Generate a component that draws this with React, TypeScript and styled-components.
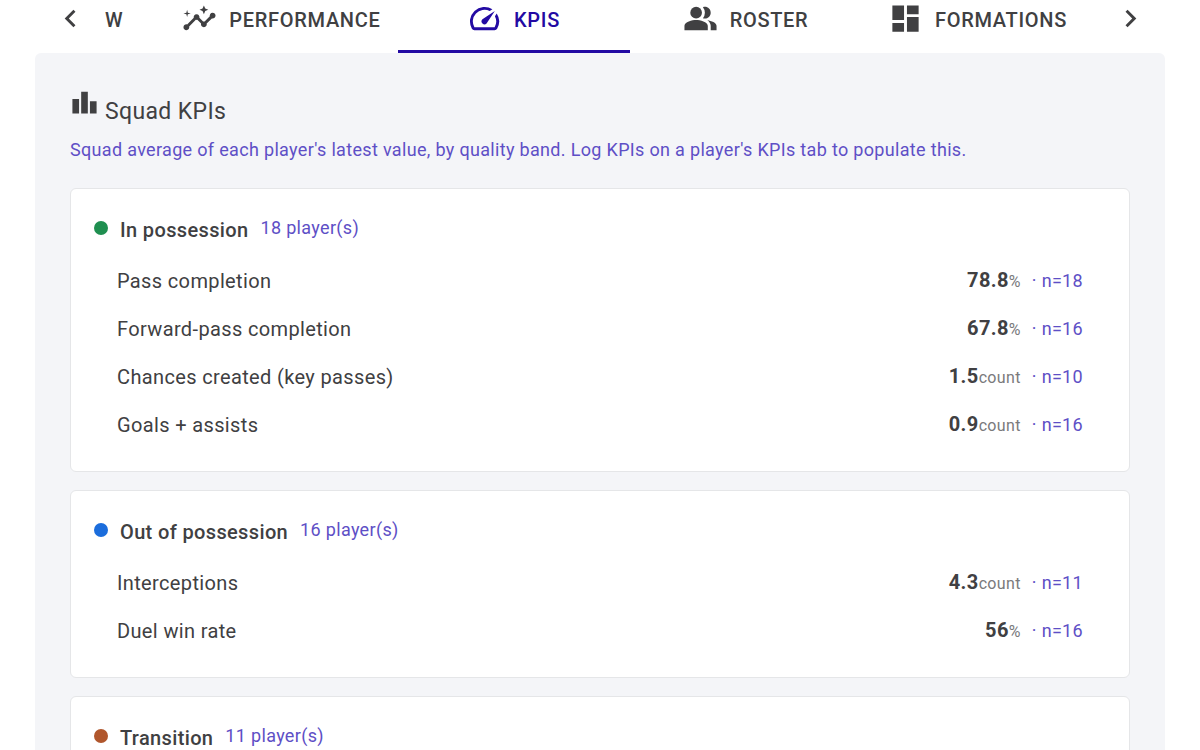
import React from 'react';
import styled, { createGlobalStyle } from 'styled-components';
import {
  MdDashboard,
  MdInsights,
  MdKeyboardArrowLeft,
  MdKeyboardArrowRight,
  MdLeaderboard,
  MdPeopleAlt,
  MdSpeed,
} from 'react-icons/md';

const color = {
  ink: '#404042',
  muted: '#7a7a7c',
  primary: '#230aa3',
  accent: '#5e4fc6',
  panel: '#f4f5f8',
  border: '#e5e6e8',
};

const GlobalStyle = createGlobalStyle`
  *, *::before, *::after { box-sizing: border-box; }
  body {
    margin: 0;
    background: #fff;
    color: ${color.ink};
    font-family: Roboto, "Liberation Sans", sans-serif;
    font-size: 20px;
    line-height: 28px;
    letter-spacing: 0.018em;
  }
`;

const Page = styled.div`
  height: 100vh;
  padding: 0 35px;
  overflow: hidden;
`;

const TabBar = styled.nav`
  display: flex;
  height: 53px;
`;

const TabList = styled.div`
  display: flex;
  flex: 1;
  min-width: 0;
  overflow: hidden;
`;

const ScrollButton = styled.button`
  display: flex;
  flex: none;
  align-items: center;
  justify-content: center;
  width: 70px;
  padding: 0 0 16px;
  border: 0;
  background: none;
  color: ${color.ink};
`;

const Tab = styled.button<{ $active?: boolean; $fit?: boolean }>`
  display: flex;
  flex: none;
  align-items: center;
  justify-content: center;
  gap: 12px;
  min-width: ${(p) => (p.$fit ? '0' : '232px')};
  padding: 0 17px 13px;
  border: 0;
  border-bottom: 3px solid ${(p) => (p.$active ? color.primary : 'transparent')};
  background: none;
  color: ${(p) => (p.$active ? color.primary : color.ink)};
  font: 500 20px/24px Roboto, "Liberation Sans", sans-serif;
  letter-spacing: 0.035em;
  text-transform: uppercase;
`;

const ClippedTab = styled(Tab)`
  padding-left: 0;
  padding-right: 42px;
`;

const TabLabel = styled.span`
  padding-top: 3px;
`;

const Panel = styled.main`
  min-height: 100vh;
  padding: 35px;
  border-radius: 6px;
  background: ${color.panel};
`;

const Heading = styled.h1`
  display: flex;
  align-items: flex-start;
  gap: 6px;
  margin: 0;
  font-size: 23px;
  font-weight: 400;
  line-height: 32px;
`;

const HeadingText = styled.span`
  padding-top: 8px;
`;

const Caption = styled.span`
  color: ${color.accent};
  font-size: 18px;
  font-weight: 400;
  line-height: 28px;
  letter-spacing: 0.018em;
`;

const Intro = styled(Caption).attrs({ as: 'p' })`
  margin: 8px 0 24px;
`;

const Cards = styled.div`
  display: flex;
  flex-direction: column;
  gap: 18px;
`;

const Card = styled.section`
  padding: 22px 23px;
  border: 1px solid ${color.border};
  border-radius: 6px;
  background: #fff;
`;

const CardHead = styled.header`
  display: flex;
  align-items: center;
  gap: 12px;
  height: 34px;
  margin-bottom: 12px;
`;

const Dot = styled.span<{ $color: string }>`
  flex: none;
  width: 14px;
  height: 14px;
  border-radius: 50%;
  background: ${(p) => p.$color};
`;

const CardTitle = styled.h2`
  margin: 0;
  padding-top: 3px;
  font-size: 20px;
  font-weight: 500;
`;

const Metrics = styled.ul`
  margin: 0;
  padding: 0 23px;
  list-style: none;
`;

const Metric = styled.li`
  display: flex;
  align-items: center;
  justify-content: space-between;
  height: 48px;
`;

const Reading = styled.span`
  display: flex;
  align-items: baseline;
`;

const Value = styled.strong`
  font-weight: 700;
`;

const Unit = styled.span`
  margin-right: 11px;
  color: ${color.muted};
  font-size: 16px;
`;

type Band = {
  title: string;
  color: string;
  players: number;
  metrics: { name: string; value: string; unit: string; n: number }[];
};

const bands: Band[] = [
  {
    title: 'In possession',
    color: '#1f8f50',
    players: 18,
    metrics: [
      { name: 'Pass completion', value: '78.8', unit: '%', n: 18 },
      { name: 'Forward-pass completion', value: '67.8', unit: '%', n: 16 },
      { name: 'Chances created (key passes)', value: '1.5', unit: 'count', n: 10 },
      { name: 'Goals + assists', value: '0.9', unit: 'count', n: 16 },
    ],
  },
  {
    title: 'Out of possession',
    color: '#1b6ddc',
    players: 16,
    metrics: [
      { name: 'Interceptions', value: '4.3', unit: 'count', n: 11 },
      { name: 'Duel win rate', value: '56', unit: '%', n: 16 },
    ],
  },
  { title: 'Transition', color: '#b0562c', players: 11, metrics: [] },
];

export default function App() {
  return (
    <Page>
      <GlobalStyle />
      <TabBar>
        <ScrollButton aria-label="Scroll tabs left">
          <MdKeyboardArrowLeft size={35} />
        </ScrollButton>
        <TabList role="tablist">
          <ClippedTab role="tab" $fit>
            <TabLabel>W</TabLabel>
          </ClippedTab>
          <Tab role="tab" $fit>
            <MdInsights size={35} />
            <TabLabel>Performance</TabLabel>
          </Tab>
          <Tab role="tab" aria-selected $active>
            <MdSpeed size={35} />
            <TabLabel>KPIs</TabLabel>
          </Tab>
          <Tab role="tab">
            <MdPeopleAlt size={35} />
            <TabLabel>Roster</TabLabel>
          </Tab>
          <Tab role="tab">
            <MdDashboard size={35} />
            <TabLabel>Formations</TabLabel>
          </Tab>
        </TabList>
        <ScrollButton aria-label="Scroll tabs right">
          <MdKeyboardArrowRight size={35} />
        </ScrollButton>
      </TabBar>
      <Panel>
        <Heading>
          <MdLeaderboard size={29} />
          <HeadingText>Squad KPIs</HeadingText>
        </Heading>
        <Intro>
          Squad average of each player's latest value, by quality band. Log KPIs on a player's KPIs
          tab to populate this.
        </Intro>
        <Cards>
          {bands.map((band) => (
            <Card key={band.title}>
              <CardHead>
                <Dot $color={band.color} />
                <CardTitle>{band.title}</CardTitle>
                <Caption>{`${band.players} player(s)`}</Caption>
              </CardHead>
              <Metrics>
                {band.metrics.map((m) => (
                  <Metric key={m.name}>
                    <span>{m.name}</span>
                    <Reading>
                      <Value>{m.value}</Value>
                      <Unit>{m.unit}</Unit>
                      <Caption>{`· n=${m.n}`}</Caption>
                    </Reading>
                  </Metric>
                ))}
              </Metrics>
            </Card>
          ))}
        </Cards>
      </Panel>
    </Page>
  );
}
